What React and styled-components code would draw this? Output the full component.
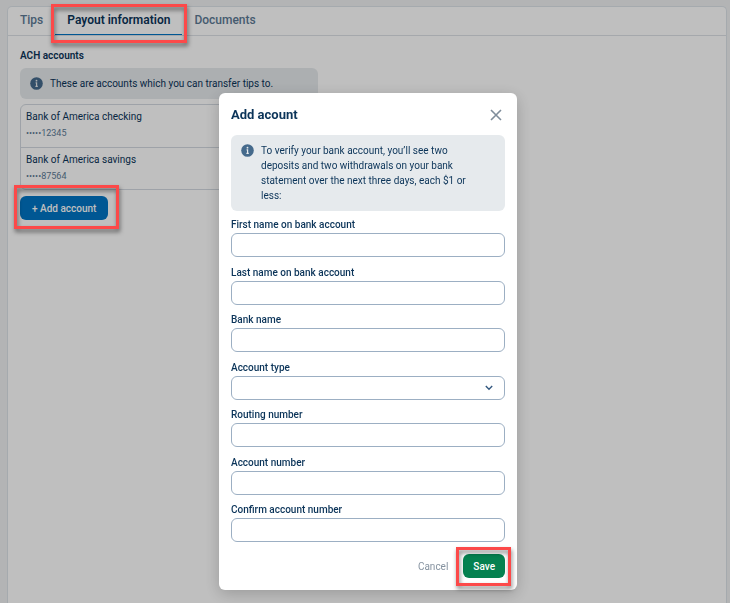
import { useState } from "react";
import styled, { createGlobalStyle } from "styled-components";

const accounts = [
  { name: "Bank of America checking", digits: "12345" },
  { name: "Bank of America savings", digits: "87564" },
];

const fields = [
  { id: "firstName", label: "First name on bank account" },
  { id: "lastName", label: "Last name on bank account" },
  { id: "bankName", label: "Bank name" },
  { id: "accountType", label: "Account type", options: ["Checking", "Savings"] },
  { id: "routing", label: "Routing number" },
  { id: "account", label: "Account number" },
  { id: "confirm", label: "Confirm account number" },
];

function InfoIcon() {
  return (
    <svg width="13" height="13" viewBox="0 0 13 13" aria-hidden="true">
      <circle cx="6.5" cy="6.5" r="6.3" fill="#456a8c" />
      <circle cx="6.5" cy="3.7" r="0.9" fill="#e6eaed" />
      <path d="M5.6 5.8h1v3.6M5.4 9.4h2.4" stroke="#e6eaed" strokeWidth="1.2" fill="none" />
    </svg>
  );
}

function Field({ id, label, options }) {
  return (
    <FieldRow>
      <label htmlFor={id}>{label}</label>
      {options ? (
        <SelectBox>
          <Select id={id} defaultValue="">
            <option value=""></option>
            {options.map((o) => (
              <option key={o}>{o}</option>
            ))}
          </Select>
          <svg width="8" height="6" viewBox="0 0 8 6" aria-hidden="true">
            <path d="M0.8 1l3.2 3.2L7.2 1" stroke="#33587f" strokeWidth="1.4" fill="none" />
          </svg>
        </SelectBox>
      ) : (
        <Input id={id} type="text" />
      )}
    </FieldRow>
  );
}

function AddAccountModal({ onClose }) {
  return (
    <Backdrop>
      <Modal role="dialog" aria-label="Add acount">
        <ModalHeader>
          <h2>Add acount</h2>
          <CloseButton type="button" aria-label="Close" onClick={onClose}>
            <svg width="12" height="12" viewBox="0 0 12 12">
              <path d="M1 1l10 10M11 1L1 11" stroke="#7f8d9b" strokeWidth="1.6" />
            </svg>
          </CloseButton>
        </ModalHeader>
        <ModalNotice>
          <InfoIcon />
          <p>
            To verify your bank account, you’ll see two deposits and two
            withdrawals on your bank statement over the next three days, each $1
            or less:
          </p>
        </ModalNotice>
        <Fields>
          {fields.map((f) => (
            <Field key={f.id} {...f} />
          ))}
        </Fields>
        <ModalFooter>
          <CancelButton type="button" onClick={onClose}>
            Cancel
          </CancelButton>
          <Callout $inset="-7px -6px -8px -7px">
            <SaveButton type="button">Save</SaveButton>
          </Callout>
        </ModalFooter>
      </Modal>
    </Backdrop>
  );
}

export default function App() {
  const [open, setOpen] = useState(true);

  return (
    <>
      <GlobalStyle />
      <Panel>
        <Tabs>
          <Tab href="#tips">Tips</Tab>
          <Callout $inset="-3px -5px -8px -4px">
            <Tab href="#payout" $active>
              Payout information
            </Tab>
          </Callout>
          <Tab href="#documents">Documents</Tab>
        </Tabs>
        <Content>
          <Heading>ACH accounts</Heading>
          <Notice>
            <InfoIcon />
            <p>These are accounts which you can transfer tips to.</p>
          </Notice>
          <AccountList>
            {accounts.map((a) => (
              <Account key={a.digits}>
                <span>{a.name}</span>
                <small>•••••{a.digits}</small>
              </Account>
            ))}
          </AccountList>
          <Callout $inset="-11px -11px -9px -6px">
            <AddButton type="button" onClick={() => setOpen(true)}>
              + Add account
            </AddButton>
          </Callout>
        </Content>
      </Panel>
      {open && <AddAccountModal onClose={() => setOpen(false)} />}
    </>
  );
}

const GlobalStyle = createGlobalStyle`
  * {
    box-sizing: border-box;
  }
  body {
    margin: 0;
    background: #eff1f2;
    font-family: Roboto, "Liberation Sans", sans-serif;
    font-size: 10px;
    line-height: 15px;
    color: #0b3459;
  }
  h2, p, ul {
    margin: 0;
    padding: 0;
  }
  button, input, select {
    font: inherit;
    color: inherit;
  }
`;

const Panel = styled.main`
  min-height: calc(100vh - 6px);
  margin: 6px 3px 0 7px;
  border: 1px solid #dde3e9;
  border-bottom: none;
  border-radius: 5px 5px 0 0;
  background: #ffffff;
`;

const Tabs = styled.nav`
  display: flex;
  height: 29px;
  border-bottom: 1px solid #dde1e6;
`;

const Tab = styled.a`
  display: block;
  height: 28px;
  padding: 0 12px;
  border-bottom: 1px solid ${(p) => (p.$active ? "#0075c4" : "transparent")};
  font-size: 12px;
  line-height: 27px;
  font-weight: ${(p) => (p.$active ? 600 : 500)};
  color: ${(p) => (p.$active ? "#0b3459" : "#5d7a95")};
  text-decoration: none;
`;

/* red frame drawn above the backdrop */
const Callout = styled.div`
  position: relative;
  width: fit-content;

  &::after {
    content: "";
    position: absolute;
    inset: ${(p) => p.$inset};
    z-index: 3;
    border: 3px solid #fc4949;
    filter: drop-shadow(1px 3px 2px rgba(0, 0, 0, 0.5));
    pointer-events: none;
  }
`;

const Content = styled.section`
  padding: 12px;
`;

const Heading = styled.h2`
  font-size: 10px;
  line-height: 15px;
  font-weight: 600;
`;

const Notice = styled.div`
  display: flex;
  gap: 7px;
  max-width: 298px;
  margin-top: 5px;
  padding: 8px 10px;
  border-radius: 6px;
  background: #e6eaed;

  svg {
    flex: none;
    margin-top: 1px;
  }
`;

const AccountList = styled.ul`
  max-width: 298px;
  margin: 5px 0 6px;
  border: 1px solid #d3d9e0;
  border-radius: 6px;
  list-style: none;
`;

const Account = styled.li`
  display: flex;
  flex-direction: column;
  height: 42px;
  padding: 4px 5px;

  & + & {
    border-top: 1px solid #d3d9e0;
  }
  small {
    font-size: 9px;
    line-height: 18px;
    color: #5d7a95;
  }
`;

const Button = styled.button`
  display: block;
  height: 24px;
  padding: 0 10px;
  border: none;
  border-radius: 6px;
  color: #ffffff;
  cursor: pointer;
`;

const AddButton = styled(Button)`
  padding: 0 12px;
  background: #0075c4;
  font-weight: 500;
`;

const SaveButton = styled(Button)`
  background: #058150;
  font-weight: 500;
`;

const CancelButton = styled(Button)`
  padding: 0;
  background: none;
  color: #8693a0;
`;

const Backdrop = styled.div`
  position: fixed;
  inset: 0;
  z-index: 2;
  display: flex;
  justify-content: center;
  padding: 93px 0 13px 6px;
  background: rgba(0, 0, 0, 0.25);
  overflow: auto;
`;

const Modal = styled.div`
  display: flex;
  flex-direction: column;
  width: 298px;
  height: fit-content;
  min-height: 100%;
  padding: 12px;
  border-radius: 6px;
  background: #ffffff;
  box-shadow: 0 4px 16px rgba(0, 0, 0, 0.2);
`;

const ModalHeader = styled.header`
  display: flex;
  justify-content: space-between;
  align-items: center;
  height: 20px;

  h2 {
    font-size: 13px;
    line-height: 18px;
    font-weight: 700;
  }
`;

const CloseButton = styled.button`
  display: flex;
  padding: 3px;
  border: none;
  background: none;
  cursor: pointer;
`;

const ModalNotice = styled(Notice)`
  margin-top: 10px;
  padding-right: 24px;
`;

const Fields = styled.form`
  display: flex;
  flex-direction: column;
  flex: 1;
  justify-content: space-between;
  margin: 6px 0 12px;
`;

const FieldRow = styled.div`
  display: flex;
  flex-direction: column;

  label {
    line-height: 16px;
    font-weight: 500;
  }
`;

const Input = styled.input`
  width: 100%;
  height: 24px;
  padding: 0 8px;
  border: 1px solid #9cafc3;
  border-radius: 6px;
  background: #ffffff;
`;

const SelectBox = styled.div`
  position: relative;

  svg {
    position: absolute;
    right: 12px;
    top: 9px;
    pointer-events: none;
  }
`;

const Select = styled(Input).attrs({ as: "select" })`
  display: block;
  appearance: none;
`;

const ModalFooter = styled.footer`
  display: flex;
  justify-content: flex-end;
  gap: 15px;
`;
